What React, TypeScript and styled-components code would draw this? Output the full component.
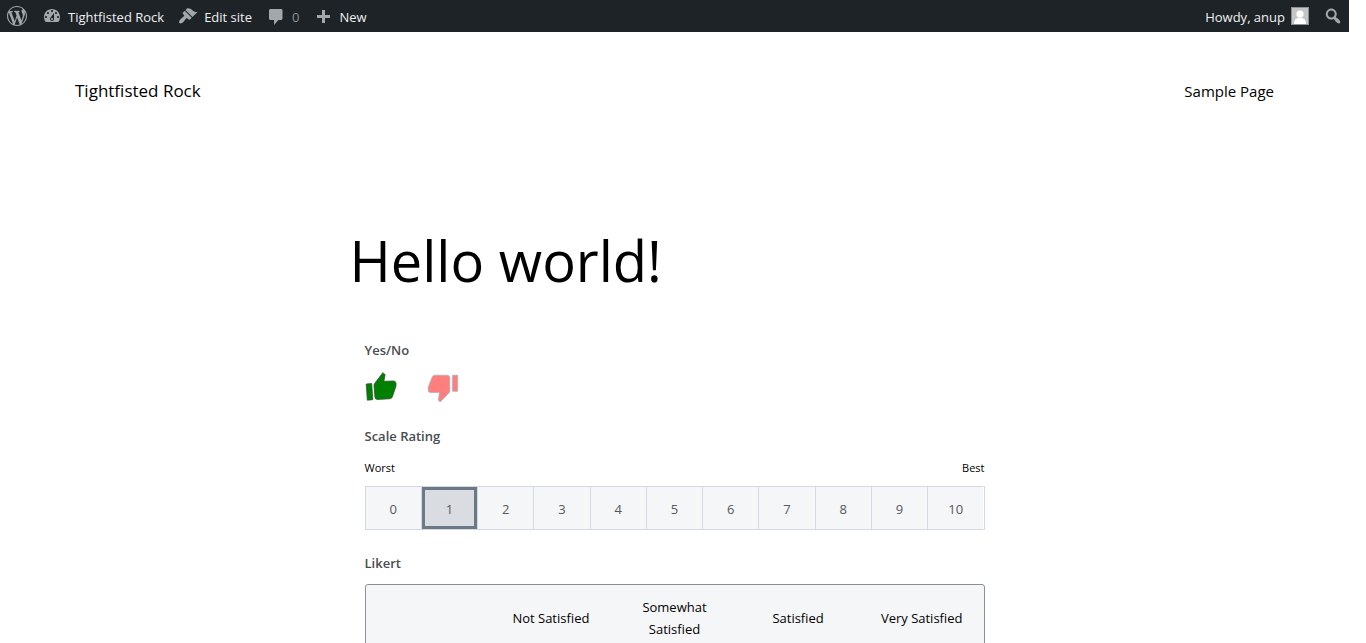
import React, { useState } from "react";
import styled, { createGlobalStyle } from "styled-components";

const GlobalStyle = createGlobalStyle`
  *, *::before, *::after { box-sizing: border-box; }
  html { scrollbar-width: none; background: #fff; }
  body {
    margin: 0;
    padding-right: 17px;
    color: #000;
    font-family: "Open Sans", "Noto Sans", sans-serif;
  }
  a { color: inherit; text-decoration: none; }
`;

const AdminBar = styled.nav`
  display: flex;
  justify-content: space-between;
  height: 32px;
  background: #1d2327;
  color: #f0f0f1;
  font-size: 13px;
  line-height: 32px;
`;

const BarGroup = styled.div`
  display: flex;
`;

const BarLink = styled.a<{ $muted?: boolean }>`
  display: flex;
  align-items: center;
  gap: 6px;
  padding: 2px 7px 0;
  white-space: nowrap;
  color: ${(p) => (p.$muted ? "#8c9196" : "#f0f0f1")};

  &:first-child {
    padding-right: 8px;
  }
`;

const BarButton = styled.button`
  display: flex;
  align-items: center;
  padding: 2px 6px 0;
  border: 0;
  background: none;
`;

const BarIcon = styled.svg`
  display: block;
  flex: none;
  width: 20px;
  height: 20px;
  margin-bottom: 2px;
  fill: #a1a7ac;
`;

const Avatar = styled.svg`
  display: block;
  width: 18px;
  height: 18px;
  margin-bottom: 2px;
`;

const SiteHeader = styled.header`
  display: flex;
  align-items: center;
  justify-content: space-between;
  padding: 43px 75px 0;
  line-height: 32px;
`;

const SiteTitle = styled.a`
  font-size: 17px;
`;

const NavLink = styled.a`
  font-size: 15px;
`;

const Main = styled.main`
  width: 100%;
  max-width: 650px;
  margin: 0 auto;
  padding-top: 113px;
`;

const Title = styled.h1`
  margin: 0;
  font-size: 56px;
  font-weight: 400;
  line-height: 80px;
`;

const Form = styled.form`
  padding: 40px 15px 0;
`;

const Field = styled.fieldset<{ $gap: number }>`
  min-width: 0;
  margin: 0 0 ${(p) => p.$gap}px;
  padding: 0;
  border: 0;
`;

const Legend = styled.legend`
  padding: 0;
  color: #494c50;
  font-size: 13px;
  font-weight: 600;
  line-height: 20px;
`;

const HiddenRadio = styled.input`
  position: absolute;
  width: 1px;
  height: 1px;
  margin: 0;
  opacity: 0;
`;

const Thumbs = styled.div`
  display: flex;
  gap: 30px;
  padding-top: 11px;
`;

const ThumbLabel = styled.label`
  position: relative;
  cursor: pointer;
`;

const ThumbIcon = styled.svg`
  display: block;
  width: 32px;
  height: 32px;
`;

const ScaleEnds = styled.div`
  display: flex;
  justify-content: space-between;
  padding: 13px 0 9px;
  font-size: 11px;
  line-height: 18px;
`;

const Scale = styled.div`
  display: flex;
  border: 1px solid #d3d9e3;
`;

const ScaleCell = styled.label<{ $selected: boolean }>`
  position: relative;
  display: flex;
  flex: 1;
  align-items: center;
  justify-content: center;
  height: 42px;
  padding-top: 2px;
  background: ${(p) => (p.$selected ? "#d9dde1" : "#f5f6f8")};
  box-shadow: ${(p) => (p.$selected ? "inset 0 0 0 3px #6b7885" : "none")};
  color: #55585c;
  font-size: 13px;
  line-height: 20px;
  cursor: pointer;

  &:not(:first-child) {
    border-left: 1px solid #d3d9e3;
  }
`;

const LikertFrame = styled.div`
  margin-top: 11px;
  border: 1px solid #8c8f94;
  border-radius: 3px;
  background: #f5f6f8;
`;

const LikertTable = styled.table`
  width: 100%;
  table-layout: fixed;
  border-collapse: collapse;
  font-size: 13px;
  line-height: 22px;

  th, td {
    padding: 11px 16px;
    font-weight: 400;
    text-align: center;
    vertical-align: middle;
  }
`;

const icons = {
  wordpress:
    "M20 10c0-5.51-4.49-10-10-10C4.48 0 0 4.49 0 10c0 5.52 4.48 10 10 10 5.51 0 10-4.48 10-10zM7.78 15.37L4.37 6.22c.55-.02 1.17-.08 1.17-.08.5-.06.44-1.13-.06-1.11 0 0-1.45.11-2.37.11-.18 0-.37 0-.58-.01C4.12 2.69 6.87 1.11 10 1.11c2.33 0 4.45.87 6.05 2.34-.68-.11-1.65.39-1.65 1.58 0 .74.45 1.36.9 2.1.35.61.55 1.36.55 2.46 0 1.49-1.4 5-1.4 5l-3.03-8.37c.54-.02.82-.17.82-.17.5-.05.44-1.25-.06-1.22 0 0-1.44.12-2.38.12-.87 0-2.33-.12-2.33-.12-.5-.03-.56 1.2-.06 1.22l.92.08 1.26 3.41zM17.41 10c.24-.64.74-1.87.43-4.25.7 1.29 1.05 2.71 1.05 4.25 0 3.29-1.73 6.24-4.4 7.78.97-2.59 1.94-5.2 2.92-7.78zM6.1 18.09C3.12 16.65 1.11 13.53 1.11 10c0-1.3.23-2.48.72-3.59C3.25 10.3 4.67 14.2 6.1 18.09zm4.03-6.63l2.58 6.98c-.86.29-1.76.45-2.71.45-.79 0-1.57-.11-2.29-.33.81-2.38 1.62-4.74 2.42-7.1z",
  dashboard:
    "M3.76 16h12.48c1.1-1.37 1.76-3.11 1.76-5 0-4.42-3.58-8-8-8s-8 3.58-8 8c0 1.89.66 3.63 1.76 5zM10 4c.55 0 1 .45 1 1s-.45 1-1 1-1-.45-1-1 .45-1 1-1zM6 6c.55 0 1 .45 1 1s-.45 1-1 1-1-.45-1-1 .45-1 1-1zm8 0c.55 0 1 .45 1 1s-.45 1-1 1-1-.45-1-1 .45-1 1-1zm-5.37 5.55L12 7v6c0 1.1-.9 2-2 2s-2-.9-2-2c0-.57.24-1.08.63-1.45zM4 10c.55 0 1 .45 1 1s-.45 1-1 1-1-.45-1-1 .45-1 1-1zm12 0c.55 0 1 .45 1 1s-.45 1-1 1-1-.45-1-1 .45-1 1-1zm-5 3c0-.55-.45-1-1-1s-1 .45-1 1 .45 1 1 1 1-.45 1-1z",
  brush:
    "M14.48 11.06L7.41 3.99l1.5-1.5c.5-.56 2.3-.47 3.51.32 1.21.8 1.43 1.28 2.91 2.1 1.18.64 2.45 1.26 4.45.85zm-.71.71L6.7 4.7 4.93 6.47c-.39.39-.39 1.02 0 1.41l1.06 1.06c.39.39.39 1.03 0 1.42-.6.6-1.43 1.11-2.21 1.69-.35.26-.7.53-1.01.84C1.43 14.23.4 16.08 1.4 17.07c.99 1 2.84-.03 4.18-1.36.31-.31.58-.66.85-1.02.57-.78 1.08-1.61 1.69-2.21.39-.39 1.02-.39 1.41 0l1.06 1.06c.39.39 1.02.39 1.41 0z",
  comment: "M4.500 3h10.500c.8 0 1.500.7 1.500 1.500v8c0 .8-.7 1.500-1.500 1.500h-2.500l-4.500 5v-5H4.500c-.8 0-1.500-.7-1.500-1.500v-8C3 3.700 3.700 3 4.500 3z",
  plus: "M17 9v3h-5v5H9v-5H4V9h5V4h3v5h5z",
  search:
    "M12.14 4.18c1.87 1.87 2.11 4.75.72 6.89.12.1.22.21.36.31.2.16.47.36.81.59.34.24.56.39.66.47.42.31.73.57.94.78.32.32.6.65.84 1 .25.35.44.69.59 1.04.14.35.21.68.18 1-.02.32-.14.59-.36.81s-.49.34-.81.36c-.31.02-.65-.04-.99-.19-.35-.14-.7-.34-1.04-.59-.35-.24-.68-.52-1-.84-.21-.21-.47-.52-.77-.93-.1-.13-.25-.35-.47-.66-.22-.32-.4-.57-.56-.78-.16-.2-.29-.35-.44-.5-2.07 1.09-4.69.76-6.44-.98-2.14-2.15-2.14-5.64 0-7.78 2.15-2.15 5.63-2.15 7.78 0zm-1.41 6.36c1.36-1.37 1.36-3.58 0-4.95-1.37-1.37-3.59-1.37-4.95 0-1.37 1.37-1.37 3.58 0 4.95 1.36 1.37 3.58 1.37 4.95 0z",
};

const Icon = ({ name }: { name: keyof typeof icons }) => (
  <BarIcon viewBox="0 0 20 20" aria-hidden="true">
    <path d={icons[name]} />
  </BarIcon>
);

const ratings = Array.from({ length: 11 }, (_, i) => i);
const likertOptions = ["Not Satisfied", "Somewhat Satisfied", "Satisfied", "Very Satisfied"];

export default function App() {
  const [answer, setAnswer] = useState("yes");
  const [rating, setRating] = useState(1);

  return (
    <>
      <GlobalStyle />
      <AdminBar aria-label="Toolbar">
        <BarGroup>
          <BarLink href="#" aria-label="WordPress">
            <Icon name="wordpress" />
          </BarLink>
          <BarLink href="#">
            <Icon name="dashboard" />
            Tightfisted Rock
          </BarLink>
          <BarLink href="#">
            <Icon name="brush" />
            Edit site
          </BarLink>
          <BarLink href="#" $muted>
            <Icon name="comment" />
            0
          </BarLink>
          <BarLink href="#">
            <Icon name="plus" />
            New
          </BarLink>
        </BarGroup>
        <BarGroup>
          <BarLink href="#">
            Howdy, anup
            <Avatar viewBox="0 0 18 18" aria-hidden="true">
              <rect width="18" height="18" fill="#8c8f94" />
              <rect x="1" y="1" width="16" height="16" fill="#c5c5c5" />
              <circle cx="9" cy="7" r="3.6" fill="#fff" />
              <path d="M3 17c0-4 2-5.500 4.500-6.200h3C13 11.500 15 13 15 17z" fill="#fff" />
            </Avatar>
          </BarLink>
          <BarButton type="button" aria-label="Search">
            <Icon name="search" />
          </BarButton>
        </BarGroup>
      </AdminBar>

      <SiteHeader>
        <SiteTitle href="#">Tightfisted Rock</SiteTitle>
        <NavLink href="#">Sample Page</NavLink>
      </SiteHeader>

      <Main>
        <Title>Hello world!</Title>
        <Form>
          <Field $gap={23}>
            <Legend>Yes/No</Legend>
            <Thumbs>
              <ThumbLabel>
                <HiddenRadio
                  type="radio"
                  name="answer"
                  aria-label="Yes"
                  checked={answer === "yes"}
                  onChange={() => setAnswer("yes")}
                />
                <ThumbIcon viewBox="0 0 32 32" opacity={answer === "yes" ? 1 : 0.5}>
                  <g fill="green" stroke="#2f4a35" strokeWidth="0.7" strokeLinejoin="round">
                    <path d="M1.200 13L6.700 12.500L7.800 28.700L2.300 29.200Z" />
                    <path d="M9.400 12.800L17.800 1.700L19.600 3Q20.200 3.500 20 4.500L18.900 10.300L28.400 9.900Q31 10 31.100 12.500L30.900 15.500L27.400 25.800Q26.800 27.600 24.800 27.800L12.500 28.500Q10.200 28.500 9.900 26.200L9 14.800Q8.900 13.600 9.400 12.800Z" />
                  </g>
                </ThumbIcon>
              </ThumbLabel>
              <ThumbLabel>
                <HiddenRadio
                  type="radio"
                  name="answer"
                  aria-label="No"
                  checked={answer === "no"}
                  onChange={() => setAnswer("no")}
                />
                <ThumbIcon viewBox="0 0 32 32" opacity={answer === "no" ? 1 : 0.5}>
                  <g fill="red" stroke="#4f6b75" strokeWidth="0.7" strokeLinejoin="round">
                    <path d="M25.500 4.200H30.700V20.300H25.500Z" />
                    <path d="M7.800 4.200H20.300Q22.800 4.200 22.800 6.800V19.800Q22.800 21 22 21.900L13.200 31L11.700 29.500Q11.200 28.900 11.400 28L12.500 21.600H3.800Q1.200 21.600 1.200 19V16.500Q1.200 15.900 1.500 15.200L5.300 5.900Q6 4.200 7.800 4.200Z" />
                  </g>
                </ThumbIcon>
              </ThumbLabel>
            </Thumbs>
          </Field>

          <Field $gap={23}>
            <Legend>Scale Rating</Legend>
            <ScaleEnds>
              <span>Worst</span>
              <span>Best</span>
            </ScaleEnds>
            <Scale>
              {ratings.map((n) => (
                <ScaleCell key={n} $selected={n === rating}>
                  <HiddenRadio
                    type="radio"
                    name="rating"
                    checked={n === rating}
                    onChange={() => setRating(n)}
                  />
                  {n}
                </ScaleCell>
              ))}
            </Scale>
          </Field>

          <Field $gap={0}>
            <Legend>Likert</Legend>
            <LikertFrame>
              <LikertTable>
                <thead>
                  <tr>
                    <td />
                    {likertOptions.map((option) => (
                      <th key={option} scope="col">
                        {option}
                      </th>
                    ))}
                  </tr>
                </thead>
              </LikertTable>
            </LikertFrame>
          </Field>
        </Form>
      </Main>
    </>
  );
}
